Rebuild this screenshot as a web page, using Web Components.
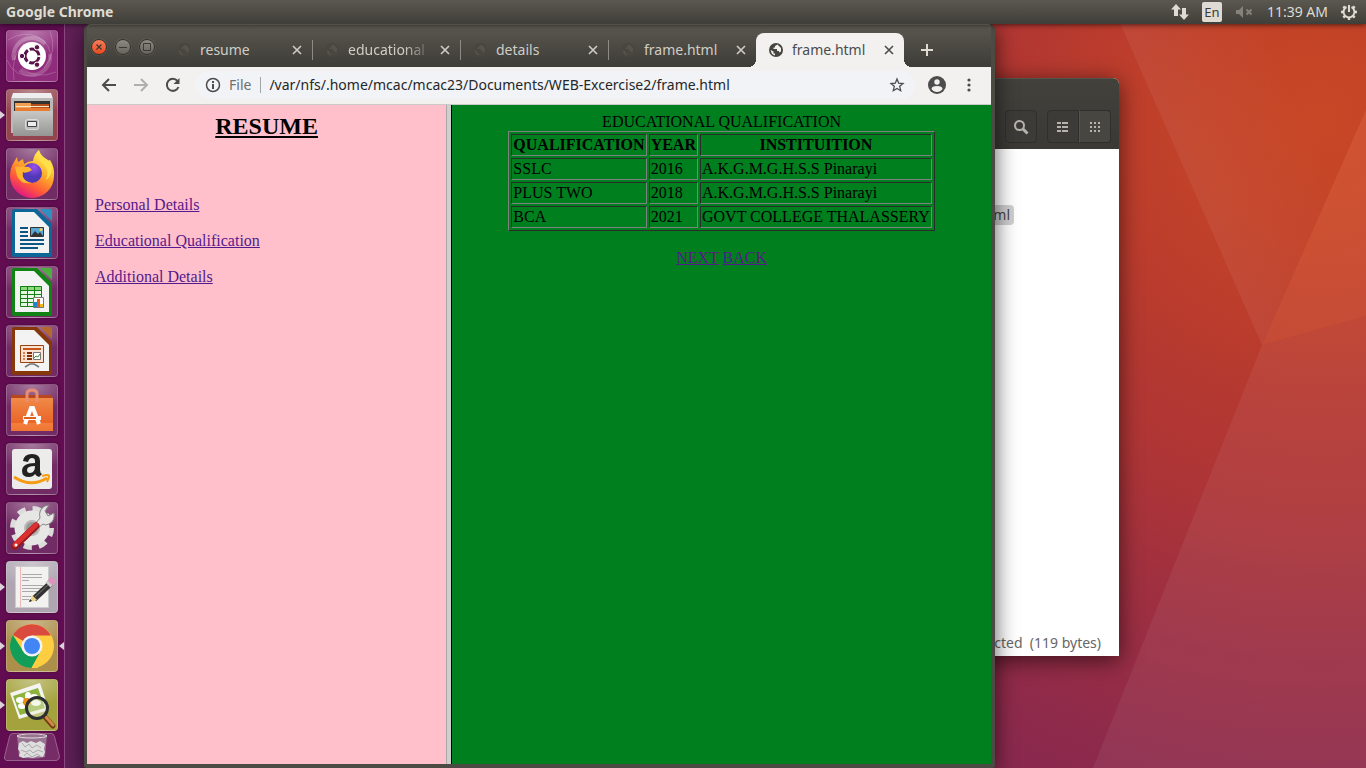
<!DOCTYPE html>
<html lang="en">
<head>
<meta charset="utf-8">
<title>Ubuntu desktop</title>
<style>
  html, body { height: 100%; margin: 0; }
  body { font: 14px/20px "Noto Sans", "Open Sans", sans-serif; background: #7c264f; overflow: hidden; }
</style>
</head>
<body>
<ubuntu-desktop></ubuntu-desktop>
<script>
const define = (name, html) => {
  const template = document.createElement('template');
  template.innerHTML = html;
  customElements.define(name, class extends HTMLElement {
    constructor() {
      super();
      this.attachShadow({ mode: 'open' }).append(template.content.cloneNode(true));
    }
    connectedCallback() {
      const label = this.getAttribute('label');
      const button = this.shadowRoot.querySelector('[data-label]');
      if (label && button) button.setAttribute('aria-label', label);
    }
  });
};

/* Wallpaper: one radial glow with lighter facets over it */
define('desktop-wallpaper', `
<style>
  :host { display: block; position: absolute; inset: 0; }
  svg { display: block; width: 100%; height: 100%; }
</style>
<svg viewBox="0 0 1366 768" preserveAspectRatio="none" aria-hidden="true">
  <defs>
    <radialGradient id="glow" gradientUnits="userSpaceOnUse" cx="1320" cy="120" r="1400">
      <stop offset="0" stop-color="#c84726"/><stop offset=".09" stop-color="#c24228"/>
      <stop offset=".15" stop-color="#bc3d2c"/><stop offset=".21" stop-color="#b43831"/>
      <stop offset=".27" stop-color="#ae3536"/><stop offset=".35" stop-color="#a0303f"/>
      <stop offset=".47" stop-color="#8e2a4b"/><stop offset=".56" stop-color="#842851"/>
      <stop offset=".85" stop-color="#642058"/><stop offset="1" stop-color="#5e2058"/>
    </radialGradient>
    <linearGradient id="fade" gradientUnits="userSpaceOnUse" x1="1180" y1="180" x2="1310" y2="120">
      <stop offset="0" stop-color="#fff" stop-opacity=".06"/><stop offset="1" stop-color="#fff" stop-opacity="0"/>
    </linearGradient>
  </defs>
  <path fill="url(#glow)" d="M0 0h1366v768H0z"/>
  <path fill="url(#fade)" d="M1110 0h256v110L1262 345z"/>
  <path fill="#ff9a70" fill-opacity=".16" d="M1366 110v206l-104 29z"/>
  <path fill="#fff" fill-opacity=".06" d="M1262 345l104-29v452h-273z"/>
</svg>`);

define('top-panel', `
<style>
  :host { display: flex; align-items: center; height: 24px; padding: 0 8px 0 6px; box-sizing: border-box;
    background: linear-gradient(#5b5850, #3f3e38); color: #dfdbd2; position: relative; z-index: 3;
    box-shadow: 0 1px 5px rgba(0,0,0,.6); font-size: 14px; }
  strong { flex: 1; }
  svg { display: block; }
  .keys { width: 20px; height: 20px; border-radius: 2px; background: #dfdbd2; color: #3c3b37;
    font-size: 13px; text-align: center; margin: 0 13px 0 12px; }
  time { margin: 0 12px 0 14px; }
</style>
<strong>Google Chrome</strong>
<svg width="20" height="18" viewBox="0 0 20 18" fill="#dfdbd2"><path d="M6 1l5 5.500H8V13H4V6.500H1zM14 17l-5-5.500h3V5h4v6.500h3z"/></svg>
<span class="keys">En</span>
<svg width="18" height="14" viewBox="0 0 18 14"><path fill="#85827a" d="M1 5h3l4-4v12l-4-4H1z"/><path d="M11.500 4.500l5 5M16.500 4.500l-5 5" stroke="#85827a" stroke-width="2"/></svg>
<time>11:39 AM</time>
<svg width="18" height="18" viewBox="0 0 18 18" fill="none" stroke="#dfdbd2"><path d="M6.500 4a5.500 5.500 0 1 0 5 0" stroke-width="2"/><path d="M9 2v7" stroke-width="2"/><path d="M1 9h3M14 9h3M9 14v3M3.300 3.300l2 2M14.700 3.300l-2 2M3.300 14.700l2-2M14.700 14.700l-2-2" stroke-width="2.400"/></svg>`);

define('launcher-item', `
<style>
  :host { display: block; position: relative; height: 52px; --tile: #661a58; }
  button { display: block; width: 52px; height: 52px; margin: 0 6px; padding: 0; border: 1px solid rgba(255,255,255,.2);
    border-radius: 4px; background: radial-gradient(ellipse 40px 26px at 50% 0, rgba(255,255,255,.42), rgba(255,255,255,.08)), var(--tile);
    box-shadow: 0 0 3px rgba(0,0,0,.35); }
  ::slotted(svg) { display: block; width: 52px; height: 52px; margin: -1px; }
  i { display: none; position: absolute; top: 22px; border: solid transparent; border-width: 4px 0; }
  .run { left: 0; border-left: 5px solid #dcd3da; }
  .focus { right: 0; border-right: 5px solid #dcd3da; }
  :host([running]) .run, :host([focused]) .focus { display: block; }
</style>
<button data-label><slot></slot></button><i class="run"></i><i class="focus"></i>`);

define('app-launcher', `
<style>
  :host { display: block; box-sizing: border-box; width: 65px; padding-top: 6px; position: relative; z-index: 2;
    background: #620d51; border-right: 1px solid #8b4880; }
  nav { display: grid; gap: 7px; }
  .trash { display: block; border: 0; background: none; padding: 0; margin: 2px 4px 0; }
  .trash svg { display: block; }
  .files { --tile: #8a3440; } .ubuntu { --tile: #861a70; } .edit { --tile: #a79daa; }
  .chrome { --tile: #a5853c; } .view { --tile: #9c9a2c; }
</style>
<nav aria-label="Launcher">
  <launcher-item class="ubuntu" label="Search your computer"><svg viewBox="0 0 52 52">
    <g fill="none" stroke="#fff"><path d="M2 10Q18 0 32 7T44 30M8 50Q4 26 18 14M50 42Q30 50 16 38M44 1Q52 22 38 38M1 30Q8 48 30 46" stroke-opacity=".2"/><path d="M8 30a18 18 0 0 1 31-16" stroke-opacity=".25" stroke-width="4"/><path d="M44 24a18 18 0 0 1-30 16" stroke-opacity=".18" stroke-width="4"/></g>
    <circle cx="26" cy="26" r="14" fill="#fff"/>
    <circle cx="26" cy="26" r="7" fill="none" stroke="#5a1348" stroke-width="3" stroke-dasharray="12.700 2" stroke-dashoffset="13.700"/>
    <g fill="#5a1348" stroke="#fff"><circle cx="16" cy="26" r="2.700"/><circle cx="31" cy="17.300" r="2.700"/><circle cx="31" cy="34.700" r="2.700"/></g></svg></launcher-item>
  <launcher-item class="files" label="Files" running><svg viewBox="0 0 52 52">
    <defs><linearGradient id="steel" x2="0" y2="1"><stop stop-color="#c8c8c6"/><stop offset="1" stop-color="#959593"/></linearGradient></defs>
    <path fill="#eee" d="M7 4h38l2 6H5z"/><path fill="#b9b9b7" d="M5 9h42v35H5z"/><path fill="#333" d="M8 12h36v10H8z"/>
    <path fill="#b8501c" d="M10 15h33v7H10z"/><path fill="#f0a050" d="M9 14h16v8H9z"/><path fill="#f6e7cd" d="M10 17h33v1H10z"/><path fill="#e87c30" d="M9 19h35v3H9z"/>
    <path fill="url(#steel)" d="M7 22h40v25H7z"/><rect x="19.500" y="30.500" width="13" height="10" rx="2" fill="#bbb" stroke="#ddd"/><path fill="#eee" stroke="#444" d="M21.500 32.500h9v5h-9z"/></svg></launcher-item>
  <launcher-item label="Firefox"><svg viewBox="0 0 52 52">
    <defs><linearGradient id="fire" x1=".8" y1=".1" x2=".3" y2="1"><stop stop-color="#fff14f"/><stop offset=".4" stop-color="#ffa52a"/><stop offset=".7" stop-color="#ff5a3a"/><stop offset="1" stop-color="#e0128a"/></linearGradient><radialGradient id="orb" cx=".6" cy=".2"><stop stop-color="#9c50f0"/><stop offset="1" stop-color="#5038b8"/></radialGradient></defs>
    <path fill="url(#fire)" d="M8 14l3-5 1 5 5-3 1 5q4-3 9-3 1-7 6-11 2 7 8 11l3-1q5 8 4 16A22 22 0 0 1 4 28q0-8 4-14z"/>
    <circle cx="26" cy="25" r="10" fill="url(#orb)"/><path fill="#ffb52e" d="M9 19q9-1 14 0l3 3q-7 4-9 2-2 9 9 11-11 2-15-7z"/><path fill="#ffe04a" d="M32 2q-2 8 5 14t3 16q10-8 2-20-7-4-10-10z"/></svg></launcher-item>
  <launcher-item label="LibreOffice Writer"><svg viewBox="0 0 52 52">
    <path fill="#0d6698" d="M8 2h23l15 15v31q0 2-2 2H8q-2 0-2-2V4q0-2 2-2z"/><path fill="#2e8fc0" d="M34 2h10q2 0 2 2v10z"/><path fill="#f3f3f3" d="M9 5h19l15 15v26H9z"/>
    <g fill="#0d5585"><path d="M14 20h8v2h-8zM14 24h8v2h-8zM14 28h8v2h-8zM14 32h24v2H14zM14 36h24v2H14zM14 40h18v2H14z"/></g><path fill="#58a8d5" stroke="#333" d="M24.500 20.500h13v9h-13z"/><path fill="#333" d="M25 29l4-5 3 3 2-2 3 4z"/><circle cx="35" cy="22.500" r="1.500" fill="#fc4"/></svg></launcher-item>
  <launcher-item label="LibreOffice Calc"><svg viewBox="0 0 52 52">
    <path fill="#118312" d="M8 2h23l15 15v31q0 2-2 2H8q-2 0-2-2V4q0-2 2-2z"/><path fill="#4cae3e" d="M34 2h10q2 0 2 2v10z"/><path fill="#f3f3f3" d="M9 5h19l15 15v26H9z"/>
    <path fill="#8bda7c" d="M14 20h22v4H14z"/><path fill="#e8f8e4" d="M14 24h22v16H14z"/><path fill="none" stroke="#148014" d="M14.500 20.500h21v20h-21zM14 24.500h22M14 28.500h22M14 32.500h22M14 36.500h22M21.500 20v20M28.500 20v20"/>
    <path fill="#fff" stroke="#777" d="M27.500 31.500h10v10h-10z"/><path fill="#2082c8" d="M28 36h3v5h-3z"/><path fill="#e06018" d="M31 33h3v8h-3z"/><path fill="#f0b820" d="M34 38h3v3h-3z"/></svg></launcher-item>
  <launcher-item label="LibreOffice Impress"><svg viewBox="0 0 52 52">
    <path fill="#87380a" d="M8 2h23l15 15v31q0 2-2 2H8q-2 0-2-2V4q0-2 2-2z"/><path fill="#b5682e" d="M34 2h10q2 0 2 2v10z"/><path fill="#f3f3f3" d="M9 5h19l15 15v26H9z"/>
    <path fill="#fae3d2" stroke="#9a4210" d="M14.500 20.500h23v17h-23z"/><path fill="#c85818" d="M17 23h18v2H17z"/><path fill="#d88050" d="M17 27h2v2h-2zM17 30h2v2h-2zM17 33h2v2h-2z"/><path fill="#803008" d="M21 27h5v2h-5zM21 30h5v2h-5zM21 33h5v2h-5z"/><path fill="#fff" stroke="#777" d="M27.500 27.500h7v7h-7z"/><path d="M28 33l2-2 2 1 2-3" fill="none" stroke="#3d8f3d"/><path d="M19 42l5-3h4l5 3" fill="none" stroke="#777" stroke-width="1.500"/></svg></launcher-item>
  <launcher-item label="Ubuntu Software"><svg viewBox="0 0 52 52">
    <defs><linearGradient id="bag" x2="0" y2="1"><stop stop-color="#f08a48"/><stop offset=".75" stop-color="#e96528"/><stop offset=".76" stop-color="#f47f3c"/><stop offset="1" stop-color="#ed7535"/></linearGradient></defs>
    <path fill="#b8471d" d="M6 11h40l1 5H5z"/><path fill="url(#bag)" d="M5 14h42v33H5z"/><path fill="none" stroke="#e98e70" stroke-width="3" d="M21 18v-8q0-4 5-4t5 4v8"/>
    <path fill="none" stroke="#fff" stroke-width="4" d="M19 40l6-16h2l6 16"/><path fill="#fff" d="M17 32h18v4H17z"/><path fill="#e45f1d" d="M18 33h12v2H18z"/></svg></launcher-item>
  <launcher-item label="Amazon"><svg viewBox="0 0 52 52">
    <rect x="6" y="6" width="40" height="40" rx="3" fill="#ececeb"/>
    <path fill="#222" d="M17 18q1-7 9-7 8 0 8 7v9q0 3 2 4l-3 3q-3-1-4-3-2 3-6 3-7 0-7-6 0-8 13-8v-2q0-3-3-3t-4 4zM29 23q-8 0-8 4 0 3 3 3 5 0 5-7z"/>
    <path fill="none" stroke="#f79b14" stroke-width="3" d="M8 34q17 11 33 1"/><path fill="none" stroke="#f79b14" stroke-width="2" d="M36 33q7-2 7 0t-2 6"/></svg></launcher-item>
  <launcher-item label="System Settings"><svg viewBox="0 0 52 52">
    <circle cx="26" cy="26" r="19" fill="none" stroke="#dcdcdb" stroke-width="6" stroke-dasharray="8 6.920"/><circle cx="26" cy="26" r="12.500" fill="none" stroke="#e6e6e4" stroke-width="10"/><circle cx="26" cy="26" r="7" fill="#999" stroke="#bbb" stroke-width="2"/>
    <path fill="#e6e6e5" stroke="#888" d="M29 22l5-6q-2-8 5-12l4-1-4 6 3 5 6-3q1 8-5 11-4 2-6 0l-5 4z"/><path d="M9 44l21-20" stroke="#921818" stroke-width="7" stroke-linecap="round"/><path d="M9 43l21-20" stroke="#dc3030" stroke-width="5" stroke-linecap="round"/><circle cx="10" cy="43" r="1.500" fill="#fff"/></svg></launcher-item>
  <launcher-item class="edit" label="Text Editor" running><svg viewBox="0 0 52 52">
    <path fill="#f2f2f1" stroke="#ccc" d="M9.500 5.500h33v41h-33z"/><path d="M14.500 6v40" stroke="#edb7b7"/><path d="M16 13.500h20M16 16.500h20M16 19.500h7M16 24.500h21M16 27.500h20M16 30.500h18M16 35.500h9M16 38.500h7" stroke="#aaa"/>
    <path d="M28 38l17-16" stroke="#333" stroke-width="6"/><path d="M29 36l15-14" stroke="#777"/><path fill="#e9d28a" d="M26 34l5 5-7 2z"/><path fill="#222" d="M24 38l2 2-3 1z"/><path d="M42 24l3-3" stroke="#ccc" stroke-width="7"/><path d="M44 22l4-4" stroke="#dc94bf" stroke-width="7"/></svg></launcher-item>
  <launcher-item class="chrome" label="Google Chrome" running focused><svg viewBox="0 0 52 52">
    <circle cx="26" cy="26" r="22" fill="#ffcd40"/><path fill="#db4a3f" d="M26 26L6.900 15A22 22 0 0 1 45 15.500H26z"/><path fill="#129d58" d="M6.900 15A22 22 0 0 0 25.500 48L35 31 17 31z"/><path fill="#ffcd40" d="M35 31L25.500 48h6L44 31z"/><circle cx="26" cy="26" r="10.500" fill="#f3f3f3"/><circle cx="26" cy="26" r="8" fill="#4285f4"/></svg></launcher-item>
  <launcher-item class="view" label="Image Viewer" running><svg viewBox="0 0 52 52">
    <path fill="#f4f4f2" d="M4 14l30-10 9 27-30 9z"/><path fill="#8db33d" d="M7 17l25-8 7 20-25 7z"/><g fill="#fff"><ellipse cx="22" cy="17" rx="3" ry="4"/><ellipse cx="14" cy="21" rx="4" ry="3"/><ellipse cx="16" cy="27" rx="4" ry="3"/><ellipse cx="28" cy="18" rx="4" ry="3"/><ellipse cx="30" cy="24" rx="5" ry="3"/></g><circle cx="21" cy="23" r="4" fill="#f28b14"/>
    <path d="M39 38l8 9" stroke="#713b12" stroke-width="5" stroke-linecap="round"/><path d="M40 38l7 8" stroke="#d18a48" stroke-width="3" stroke-linecap="round"/><circle cx="31" cy="29" r="10.500" fill="#e8edd0" fill-opacity=".45" stroke="#2b2e2c" stroke-width="3"/></svg></launcher-item>
</nav>
<button class="trash" aria-label="Trash"><svg width="56" height="28" viewBox="0 0 56 28">
  <path fill="#fff" fill-opacity=".13" stroke="#fff" stroke-opacity=".3" d="M8.500.5h39q2 0 3 3l5 20q0 3-3 4h-50q-3-1-2-4l5-20q1-3 3-3z"/>
  <path fill="#bbb" fill-opacity=".5" d="M13 2h30l-2 22q-13 3-26 0z"/><ellipse cx="28" cy="3" rx="15" ry="2" fill="none" stroke="#ddd"/>
  <path fill="#dedede" d="M15 10l4-2 4 2 4-2 5 2 4-2 5 3-1 5 1 3-2 5-5-1-5 2-5-1-5 1-4-2 1-4-2-3z"/>
  <path fill="none" stroke="#aaa" d="M18 10l3 4 4-3 3 4 5-3 4 3M17 17l5 2 4-2 3 3 5-3 5 2M20 23l3-3 5 4 5-3 3 2"/></svg></button>`);

/* Tab with globe, title and close button */
define('browser-tab', `
<style>
  :host { display: flex; align-items: center; position: relative; box-sizing: border-box; width: 148px; height: 34px;
    padding: 0 8px 0 13px; color: #d0cdc6; --globe: #48463f; }
  :host([divided])::after { content: ""; position: absolute; right: -1px; top: 7px; height: 20px; width: 1px; background: #8c8a83; }
  :host([selected]) { background: #f2f1f0; color: #4c4c4c; border-radius: 8px 8px 0 0; --globe: #45443f; }
  :host([selected])::before { content: ""; position: absolute; inset: auto -8px 0; height: 8px;
    background: radial-gradient(circle at 0 0, transparent 8px, #f2f1f0 8px) left / 8px 8px no-repeat,
      radial-gradient(circle at 100% 0, transparent 8px, #f2f1f0 8px) right / 8px 8px no-repeat; }
  button { border: 0; padding: 0; background: none; color: inherit; font: inherit; position: relative; }
  .title { display: flex; align-items: center; flex: 1; gap: 9px; min-width: 0; }
  .text { flex: 1; text-align: left; overflow: hidden; white-space: nowrap; }
  :host([fade]) .text { -webkit-mask-image: linear-gradient(90deg, #000 56px, transparent 84px); mask-image: linear-gradient(90deg, #000 56px, transparent 84px); }
  .close { width: 14px; height: 14px; }
  svg { display: block; flex: none; }
</style>
<button class="title" role="tab"><svg width="14" height="14" viewBox="0 0 14 14"><circle cx="7" cy="7" r="7" fill="var(--globe)"/><path d="M8.500 1.500L6 3v1.500H4.500V6H8v2h2v1.500l2-1V5zM1.500 7l3 1.500v2H6v2L3 11z" fill="#f2f1f0" fill-opacity="var(--land, .08)"/></svg><span class="text"><slot></slot></span></button>
<button class="close" data-label><svg width="14" height="14" viewBox="0 0 14 14" stroke="currentColor" stroke-width="1.600"><path d="M3 3l8 8M11 3l-8 8"/></svg></button>`);

define('window-controls', `
<style>
  :host { display: flex; gap: 8px; }
  button { width: 16px; height: 16px; box-sizing: border-box; border: 1px solid #33322e; border-radius: 50%; padding: 0; background: linear-gradient(#8c8a82, #65635c);
    box-shadow: 0 0 1px #9a978c; }
  .quit { background: linear-gradient(#fb7b58, #e84a20); }
  svg { display: block; width: 14px; height: 14px; fill: none; stroke: #3a3934; }
</style>
<button class="quit" aria-label="Close"><svg><path d="M4.500 4.500l5 5M9.500 4.500l-5 5" stroke-width="1.300"/></svg></button>
<button aria-label="Minimize"><svg><path d="M3 7.500h8"/></svg></button>
<button aria-label="Maximize"><svg><path d="M3.500 3.500h7v7h-7z"/></svg></button>`);

define('browser-toolbar', `
<style>
  :host { display: flex; align-items: center; height: 38px; box-sizing: border-box; padding: 0 6px 1px; background: #f2f1f0;
    border-bottom: 1px solid #cbcac8; color: #4c4c4c; }
  button { border: 0; background: none; padding: 0; width: 32px; height: 28px; display: grid; place-items: center; color: inherit; }
  button:disabled { color: #b0afae; }
  svg { display: block; fill: none; stroke: currentColor; stroke-width: 2; }
  form { flex: 1; display: flex; align-items: center; gap: 8px; height: 28px; border-radius: 14px; margin: 0 6px; padding: 0 2px 0 10px; background: #f1f3f6; }
  label { color: #6c6f73; padding-right: 9px; border-right: 1px solid #a2a4a7; line-height: 16px; }
  input { flex: 1; min-width: 0; border: 0; padding: 0; background: none; outline: 0; color: #25272a; font: inherit; }
</style>
<button aria-label="Back"><svg width="16" height="16"><path d="M15 8H2M8 2L2 8l6 6"/></svg></button>
<button aria-label="Forward" disabled><svg width="16" height="16"><path d="M1 8h13M8 2l6 6-6 6"/></svg></button>
<button aria-label="Reload"><svg width="16" height="16"><path d="M13.500 10A6 6 0 1 1 12.500 4"/><path d="M14.500 1v6h-6z" fill="currentColor" stroke="none"/></svg></button>
<form onsubmit="return false">
  <svg width="16" height="16"><circle cx="8" cy="8" r="6.500" style="stroke-width:1.500"/><path d="M8 7v5M8 4v2"/></svg>
  <label for="url">File</label><input id="url" value="/var/nfs/.home/mcac/mcac23/Documents/WEB-Excercise2/frame.html">
  <button type="button" aria-label="Bookmark this page"><svg width="16" height="16" style="stroke-width:1.300"><path d="M8 2l1.700 4.200 4.300.3-3.300 2.800 1 4.400L8 11.400l-3.700 2.300 1-4.400L2 6.500l4.300-.3z"/></svg></button>
</form>
<button aria-label="Profile"><svg width="18" height="18"><circle cx="9" cy="9" r="9" fill="currentColor" stroke="none"/><circle cx="9" cy="6" r="2.700" fill="#f2f1f0" stroke="none"/><path d="M3.500 13q0-3 5.500-3t5.500 3q-2 3-5.500 3t-5.500-3z" fill="#f2f1f0" stroke="none"/></svg></button>
<button aria-label="Menu"><svg width="16" height="16" style="fill:currentColor;stroke:none"><circle cx="8" cy="3" r="1.600"/><circle cx="8" cy="8" r="1.600"/><circle cx="8" cy="13" r="1.600"/></svg></button>`);

define('resume-index', `
<style>
  :host { display: block; padding: 8px; background: #ffc0cb; color: #000; font: 16px/18px "Liberation Serif", serif; }
  h2 { margin: 0 0 56px; font-size: 24px; line-height: 27px; text-align: center; text-decoration: underline; }
  ul { list-style: none; margin: 0; padding: 0; display: grid; gap: 18px; }
  a { color: #551a8b; }
</style>
<h2>RESUME</h2>
<ul><li><a href="#personal">Personal Details</a></li><li><a href="#education">Educational Qualification</a></li><li><a href="#additional">Additional Details</a></li></ul>`);

define('education-page', `
<style>
  :host { display: block; padding: 8px; background: #007f1f; color: #000; font: 16px/18px "Liberation Serif", serif; text-align: center; }
  table { margin: 0 auto 18px; border: 1px solid; border-color: #808080 #2c2c2c #2c2c2c #808080; border-spacing: 2px; text-align: left; }
  th, td { border: 1px solid; border-color: #2c2c2c #808080 #808080 #2c2c2c; padding: 1px; }
  th { text-align: center; }
  p { margin: 0; }
  a { color: #551a8b; }
</style>
<table>
  <caption>EDUCATIONAL QUALIFICATION</caption>
  <thead><tr><th>QUALIFICATION</th><th>YEAR</th><th>INSTITUITION</th></tr></thead>
  <tbody>
    <tr><td>SSLC</td><td>2016</td><td>A.K.G.M.G.H.S.S Pinarayi</td></tr>
    <tr><td>PLUS TWO</td><td>2018</td><td>A.K.G.M.G.H.S.S Pinarayi</td></tr>
    <tr><td>BCA</td><td>2021</td><td>GOVT COLLEGE THALASSERY</td></tr>
  </tbody>
</table>
<p><a href="#next">NEXT</a> <a href="#back">BACK</a></p>`);

define('browser-window', `
<style>
  :host { display: flex; flex-direction: column; box-sizing: border-box; border: solid #4b4a43; border-width: 0 4px 4px 3px; border-radius: 6px 6px 3px 3px;
    background: linear-gradient(#5b5850, #3d3c37) 0 0 / 100% 43px no-repeat border-box #4b4a43; box-shadow: inset 0 1px #7d7a72, 0 4px 22px rgba(0,0,0,.65); }
  header { display: flex; align-items: flex-end; height: 42px; padding: 1px 0 0 4px; }
  window-controls { margin: 0 9px 12px 0; }
  browser-tab[selected] { --land: 1; }
  .new { border: 0; background: none; width: 28px; height: 34px; padding: 0; margin-left: 9px; display: grid; place-items: center; color: #dfdbd2; }
  main { flex: 1; display: grid; grid-template-columns: 2fr 6px 3fr; }
  .split { box-sizing: border-box; background: #d0cfce; border-left: 1px solid #a8a8a8; border-right: 1px solid #000; }
</style>
<header>
  <window-controls></window-controls>
  <browser-tab divided label="Close tab">resume</browser-tab>
  <browser-tab divided fade label="Close tab">educational</browser-tab>
  <browser-tab divided label="Close tab">details</browser-tab>
  <browser-tab label="Close tab">frame.html</browser-tab>
  <browser-tab selected label="Close tab">frame.html</browser-tab>
  <button class="new" aria-label="New tab"><svg width="12" height="12"><path d="M6 0v12M0 6h12" stroke="currentColor" stroke-width="2"/></svg></button>
</header>
<browser-toolbar></browser-toolbar>
<main><resume-index></resume-index><div class="split"></div><education-page></education-page></main>`);

define('files-window', `
<style>
  :host { display: flex; flex-direction: column; background: #fff; border-radius: 6px 6px 0 0; color: #666; box-shadow: 0 4px 22px rgba(0,0,0,.6); overflow: hidden; }
  header { display: flex; justify-content: flex-end; align-items: flex-end; gap: 10px; height: 71px; box-sizing: border-box; padding: 0 8px 6px; background: linear-gradient(#42413c, #3a3935); border-top: 1px solid #55534c; }
  button { width: 32px; height: 33px; box-sizing: border-box; padding: 0; border: 1px solid #302f2b; border-radius: 4px; background: #3c3b37; display: grid; place-items: center; color: #b5b3ab; }
  .views { display: flex; }
  .views button:first-child { border-radius: 4px 0 0 4px; }
  .views button:last-child { border-radius: 0 4px 4px 0; background: #474640; border-left-color: #55534c; }
  main { flex: 1; display: flex; align-items: flex-start; justify-content: flex-end; padding: 56px 105px 0 0; }
  .name { background: #d0d0d0; border-radius: 4px; padding: 0 4px; color: #444; }
  footer { text-align: right; padding: 0 18px 3px 0; white-space: pre; }
  svg { display: block; }
</style>
<header>
  <button aria-label="Search"><svg width="16" height="16" fill="none" stroke="currentColor"><circle cx="6.500" cy="6.500" r="4.500" stroke-width="2"/><path d="M10 10l4.500 4.500" stroke-width="3"/></svg></button>
  <div class="views">
    <button aria-label="List view"><svg width="12" height="10" fill="currentColor"><path d="M0 0h4v2H0zM5 0h6v2H5zM0 4h4v2H0zM5 4h6v2H5zM0 8h4v2H0zM5 8h6v2H5z"/></svg></button>
    <button aria-label="Grid view"><svg width="10" height="10" fill="currentColor"><path d="M0 0h2v2H0zM4 0h2v2H4zM8 0h2v2H8zM0 4h2v2H0zM4 4h2v2H4zM8 4h2v2H8zM0 8h2v2H0zM4 8h2v2H4zM8 8h2v2H8z"/></svg></button>
  </div>
</header>
<main><span class="name">frame.html</span></main>
<footer>“frame.html” selected  (119 bytes)</footer>`);

define('ubuntu-desktop', `
<style>
  :host { display: grid; grid-template: auto 1fr / auto 1fr; height: 100vh; position: relative; overflow: hidden; }
  top-panel { grid-column: 1 / -1; }
  .space { position: relative; }
  /* Free-floating windows */
  files-window { position: absolute; left: 480px; right: 247px; top: 54px; bottom: 112px; }
  browser-window { position: absolute; left: 19px; right: 371px; top: 0; bottom: 0; }
</style>
<desktop-wallpaper></desktop-wallpaper>
<top-panel></top-panel>
<app-launcher></app-launcher>
<div class="space"><files-window></files-window><browser-window></browser-window></div>`);
</script>
</body>
</html>
